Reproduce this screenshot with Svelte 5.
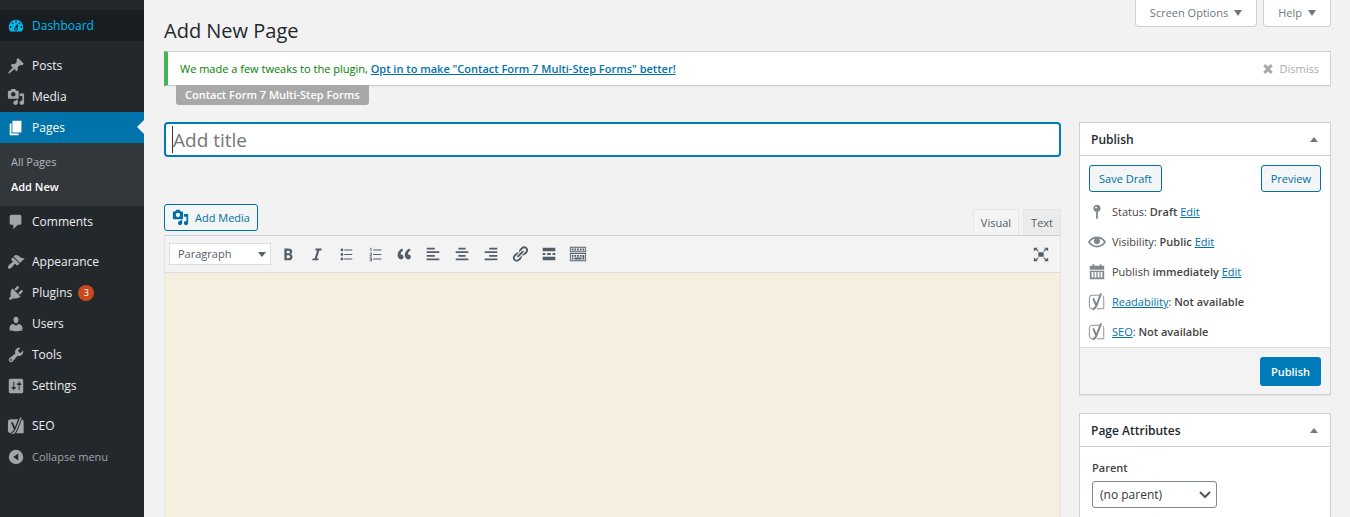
<script>
  const icons = {
    dashboard: 'M3.76 16h12.48c1.1-1.37 1.76-3.11 1.76-5 0-4.42-3.58-8-8-8s-8 3.58-8 8c0 1.89.66 3.63 1.76 5zM10 4c.55 0 1 .45 1 1s-.45 1-1 1-1-.45-1-1 .45-1 1-1zM6 6c.55 0 1 .45 1 1s-.45 1-1 1-1-.45-1-1 .45-1 1-1zm8 0c.55 0 1 .45 1 1s-.45 1-1 1-1-.45-1-1 .45-1 1-1zm-5.37 5.55L12 7v6c0 1.1-.9 2-2 2s-2-.9-2-2c0-.57.24-1.08.63-1.45zM4 10c.55 0 1 .45 1 1s-.45 1-1 1-1-.45-1-1 .45-1 1-1zm12 0c.55 0 1 .45 1 1s-.45 1-1 1-1-.45-1-1 .45-1 1-1zm-5 3c0-.55-.45-1-1-1s-1 .45-1 1 .45 1 1 1 1-.45 1-1z',
    post: 'M10.44 3.02l1.82-1.82 6.36 6.35-1.83 1.82c-1.05-.68-2.48-.57-3.41.36l-.75.75c-.92.93-1.04 2.35-.35 3.41l-1.83 1.82-2.41-2.41-2.8 2.79c-.42.42-3.38 2.71-3.8 2.29s1.86-3.39 2.28-3.81l2.79-2.79L4.1 9.36l1.83-1.82c1.05.69 2.48.57 3.4-.36l.75-.75c.93-.92 1.05-2.35.36-3.41z',
    media: 'M13 11V4c0-.55-.45-1-1-1h-1.67L9 1H5L3.67 3H2c-.55 0-1 .45-1 1v7c0 .55.45 1 1 1h10c.55 0 1-.45 1-1zM7 4.5c1.38 0 2.5 1.12 2.5 2.5S8.38 9.5 7 9.5 4.5 8.38 4.5 7 5.62 4.5 7 4.5zM14 6h5v10.5c0 1.38-1.12 2.5-2.5 2.5S14 17.88 14 16.5s1.12-2.5 2.5-2.5c.17 0 .34.02.5.05V9h-3V6zm-4 8.05V13h2v3.5c0 1.38-1.12 2.5-2.5 2.5S7 17.88 7 16.5 8.12 14 9.5 14c.17 0 .34.02.5.05z',
    page: 'M6 15V2h10v13H6zm-1 1h8v2H3V5h2v11z',
    comments: 'M5 2h9c1.1 0 2 .9 2 2v7c0 1.1-.9 2-2 2h-2l-5 5v-5H5c-1.1 0-2-.9-2-2V4c0-1.1.9-2 2-2z',
    appearance: 'M14.48 11.06L7.41 3.99l1.5-1.5c.5-.56 2.3-.47 3.51.32 1.21.8 1.43 1.28 2.91 2.1 1.18.64 2.45 1.26 4.45.85zm-.71.71L6.7 4.7 4.93 6.47c-.39.39-.39 1.02 0 1.41l1.06 1.06c.39.39.39 1.03 0 1.42-.6.6-1.43 1.11-2.21 1.69-.35.26-.7.53-1.01.84C1.43 14.23.4 16.08 1.4 17.07c.99 1 2.84-.03 4.18-1.36.31-.31.58-.66.85-1.02.57-.78 1.08-1.61 1.69-2.21.39-.39 1.02-.39 1.41 0l1.06 1.06c.39.39 1.02.39 1.41 0z',
    plugins: 'M13.11 4.36L9.87 7.6 8 5.73l3.24-3.24c.35-.34 1.05-.2 1.56.32.52.51.66 1.21.31 1.55zm-8 1.77l.91-1.12 9.01 9.01-1.19.84c-.71.71-2.63 1.16-3.82 1.16H6.14L4.9 17.26c-.59.59-1.54.59-2.12 0-.59-.58-.59-1.53 0-2.12l1.24-1.24v-3.88c0-1.13.4-3.19 1.09-3.89zm7.26 3.97l3.24-3.24c.34-.35 1.04-.21 1.55.31.52.51.66 1.21.31 1.55l-3.24 3.25z',
    users: 'M10 9.25c-2.27 0-2.73-3.44-2.73-3.44C7 4.02 7.82 2 9.97 2c2.16 0 2.98 2.02 2.71 3.81 0 0-.41 3.44-2.68 3.44zm0 2.57L12.72 10c2.39 0 4.52 2.33 4.52 4.53v2.49s-3.65 1.13-7.24 1.13c-3.65 0-7.24-1.13-7.24-1.13v-2.49c0-2.25 1.94-4.48 4.47-4.48z',
    tools: 'M16.68 9.77c-1.34 1.34-3.3 1.67-4.95.99l-5.41 6.52c-.99.99-2.59.99-3.58 0s-.99-2.59 0-3.57l6.52-5.42c-.68-1.65-.35-3.61.99-4.95 1.28-1.28 3.12-1.62 4.72-1.06l-2.89 2.89 2.82 2.82 2.86-2.87c.53 1.58.18 3.39-1.08 4.65zM3.81 16.21c.4.39 1.04.39 1.43 0 .4-.4.4-1.04 0-1.43-.39-.4-1.03-.4-1.43 0-.39.39-.39 1.03 0 1.43z',
    settings: 'M18 16V4c0-1.1-.9-2-2-2H4c-1.1 0-2 .9-2 2v12c0 1.1.9 2 2 2h12c1.1 0 2-.9 2-2zM8 11h1c.55 0 1 .45 1 1s-.45 1-1 1H8v1.5c0 .28-.22.5-.5.5s-.5-.22-.5-.5V13H6c-.55 0-1-.45-1-1s.45-1 1-1h1V5.5c0-.28.22-.5.5-.5s.5.22.5.5V11zm5-2h-1c-.55 0-1-.45-1-1s.45-1 1-1h1V5.5c0-.28.22-.5.5-.5s.5.22.5.5V7h1c.55 0 1 .45 1 1s-.45 1-1 1h-1v5.5c0 .28-.22.5-.5.5s-.5-.22-.5-.5V9z',
    collapse: 'M10 2a8 8 0 1 0 0 16a8 8 0 1 0 0-16zM12.5 6v8L7 10z',
    bold: 'M6 4v13h4.54c1.37 0 2.46-.33 3.26-1 .8-.66 1.2-1.58 1.2-2.77 0-.84-.17-1.51-.51-2.01s-.9-.85-1.67-1.03v-.09c.57-.1 1.02-.4 1.36-.9s.51-1.13.51-1.91c0-1.14-.39-1.98-1.17-2.5C12.75 4.26 11.5 4 9.78 4H6zm2.57 5.15V6.26h1.36c.73 0 1.27.11 1.61.32.34.22.51.58.51 1.07 0 .54-.16.92-.47 1.15s-.82.35-1.51.35h-1.5zm0 2.19h1.6c1.44 0 2.16.53 2.16 1.61 0 .6-.17 1.05-.51 1.34s-.86.43-1.57.43H8.57v-3.38z',
    italic: 'M14.78 6h-2.13l-2.8 9h2.12l-.62 2H4.6l.62-2h2.14l2.8-9H8.03l.62-2h6.75z',
    ul: 'M5.5 7C4.67 7 4 6.33 4 5.5 4 4.68 4.67 4 5.5 4 6.32 4 7 4.68 7 5.5 7 6.33 6.32 7 5.5 7zM8 5h9v1H8V5zm-2.5 7c-.83 0-1.5-.67-1.5-1.5C4 9.68 4.67 9 5.5 9c.82 0 1.5.68 1.5 1.5 0 .83-.68 1.5-1.5 1.5zM8 10h9v1H8v-1zm-2.5 7c-.83 0-1.5-.67-1.5-1.5 0-.82.67-1.5 1.5-1.5.82 0 1.5.68 1.5 1.5 0 .83-.68 1.5-1.5 1.5zM8 15h9v1H8v-1z',
    ol: 'M5 3h1v4H5V4H4zM8 5h9v1H8zM4 8.5h2.5v2.3L5.2 12h1.4v.9H4v-.9l1.6-1.6v-1H4zM8 10h9v1H8zM4 14h2.6v4H4v-.9h1.7v-.7H4.5v-.8h1.2v-.7H4zM8 15h9v1H8z',
    quote: 'M9.49 13.22c0-.74-.2-1.38-.61-1.9-.62-.78-1.83-.88-2.53-.72-.29-1.65 1.11-3.75 2.92-4.65L7.88 4c-2.73 1.3-5.42 4.28-4.96 8.05C3.21 14.43 4.59 16 6.54 16c.85 0 1.56-.25 2.12-.75s.83-1.18.83-2.03zm8.05 0c0-.74-.2-1.38-.61-1.9-.63-.78-1.83-.88-2.53-.72-.29-1.65 1.11-3.75 2.92-4.65L15.93 4c-2.73 1.3-5.41 4.28-4.95 8.05.29 2.38 1.66 3.95 3.61 3.95.85 0 1.56-.25 2.12-.75s.83-1.18.83-2.03z',
    left: 'M12 5V3H3v2h9zm5 4V7H3v2h14zm-5 4v-2H3v2h9zm5 4v-2H3v2h14z',
    center: 'M14 5V3H6v2h8zm3 4V7H3v2h14zm-3 4v-2H6v2h8zm3 4v-2H3v2h14z',
    right: 'M17 5V3H8v2h9zm0 4V7H3v2h14zm0 4v-2H8v2h9zm0 4v-2H3v2h14z',
    link: 'M17.74 2.76c1.68 1.69 1.68 4.41 0 6.1l-1.53 1.52c-1.12 1.12-2.7 1.47-4.14 1.09l2.62-2.61.76-.77.76-.76c.84-.84.84-2.2 0-3.04-.84-.85-2.2-.85-3.04 0l-.77.76-3.38 3.38c-.37-1.44-.02-3.02 1.1-4.14l1.52-1.53c1.69-1.68 4.42-1.68 6.1 0zM8.59 13.43l5.34-5.34c.42-.42.42-1.1 0-1.52-.44-.43-1.13-.39-1.53 0l-5.33 5.34c-.42.42-.42 1.1 0 1.52.44.43 1.13.39 1.52 0zm-.76 2.29l4.14-4.15c.38 1.44.03 3.02-1.09 4.14l-1.52 1.53c-1.69 1.68-4.41 1.68-6.1 0-1.68-1.68-1.68-4.42 0-6.1l1.53-1.52c1.12-1.12 2.7-1.47 4.14-1.1l-4.14 4.15c-.85.84-.85 2.2 0 3.05.84.84 2.2.84 3.04 0z',
    more: 'M17 7V3H3v4h14zM6 11V9H3v2h3zm6 0V9H8v2h4zm5 0V9h-3v2h3zm0 6v-4H3v4h14z',
    sink: 'M19 2v6H1V2zm-1 5V3H2v4zM5 4v2H3V4zm3 0v2H6V4zm3 0v2H9V4zm3 0v2h-2V4zm3 0v2h-2V4zm2 5v9H1V9zm-1 8v-7H2v7zM5 11v2H3v-2zm3 0v2H6v-2zm3 0v2H9v-2zm3 0v2h-2v-2zm3 0v5h-2v-5zM5 14v2H3v-2zm9 0v2H6v-2z',
    full: 'M7 8h6v5H7zM2 3h4.500L5.200 4.300 7.500 6.600l-.9.9L4.300 5.200 2 7zM18 3v4l-2.300-1.800-2.300 2.300-.9-.9 2.300-2.300L13.500 3zM2 18v-4l2.300 1.800 2.300-2.300.9.9-2.300 2.300L6.500 18zM18 18h-4.500l1.300-1.300-2.300-2.300.9-.9 2.300 2.300L18 14z',
    pin: 'M14 6c0 1.86-1.28 3.41-3 3.86V16c0 1-2 2-2 2V9.86c-1.72-.45-3-2-3-3.86 0-2.21 1.79-4 4-4s4 1.79 4 4zM8 5c0 .55.45 1 1 1s1-.45 1-1-.45-1-1-1-1 .45-1 1z',
    eye: 'M19.7 9.4C17.7 6 14 3.9 10 3.9S2.3 6 .3 9.4L0 10l.3.6c2 3.4 5.7 5.5 9.7 5.5s7.700-2.100 9.700-5.500l.3-.6zM10 14.100c-3.100 0-6-1.600-7.700-4.100C3.600 8 5.700 6.600 8 6.100c-.9.600-1.500 1.700-1.500 2.900 0 1.900 1.600 3.500 3.500 3.500s3.500-1.600 3.500-3.500c0-1.200-.600-2.300-1.500-2.900 2.300.500 4.400 1.900 5.700 3.900-1.700 2.500-4.600 4.100-7.700 4.100z',
    calendar: 'M5 1.500h2V3h6V1.500h2V3h3v4.500H2V3h3zM2 8.500h16V18H2zm2 1.500v6h2v-6zm3.300 0v6h2v-6zm3.400 0v6h2v-6zm3.300 0v6h2v-6z',
    cross: 'M2 5l3.500-3.500L10 6l4.500-4.500L18 5l-4.500 5 4.500 5-3.500 3.500L10 14l-4.500 4.500L2 15l4.500-5z'
  };

  const menu = [
    [{ name: 'Dashboard', icon: 'dashboard', state: 'hover' }],
    [
      { name: 'Posts', icon: 'post' },
      { name: 'Media', icon: 'media' },
      { name: 'Pages', icon: 'page', state: 'current', sub: ['All Pages', 'Add New'] },
      { name: 'Comments', icon: 'comments' }
    ],
    [
      { name: 'Appearance', icon: 'appearance' },
      { name: 'Plugins', icon: 'plugins', count: 3 },
      { name: 'Users', icon: 'users' },
      { name: 'Tools', icon: 'tools' },
      { name: 'Settings', icon: 'settings' }
    ],
    [{ name: 'SEO', icon: 'yoast' }]
  ];

  const tools = [
    ['Bold', 'bold'],
    ['Italic', 'italic'],
    ['Bulleted list', 'ul'],
    ['Numbered list', 'ol'],
    ['Blockquote', 'quote'],
    ['Align left', 'left'],
    ['Align center', 'center'],
    ['Align right', 'right'],
    ['Insert link', 'link'],
    ['Read more', 'more'],
    ['Toolbar toggle', 'sink']
  ];

  let title = $state('');
</script>

{#snippet icon(name)}
  <svg class="icon" viewBox="0 0 20 20" aria-hidden="true">
    <path fill="currentColor" fill-rule="evenodd" d={icons[name]} />
  </svg>
{/snippet}

{#snippet yoast(solid)}
  <svg class="icon" viewBox="0 0 20 20" aria-hidden="true">
    {#if solid}
      <path fill="currentColor" d="M4.500 2.500H15.500A3 3 0 0 1 18.500 5.500V18H4.500A3.500 3.500 0 0 1 1 14.500V6a3.500 3.500 0 0 1 3.500-3.500z" />
      <path fill="none" stroke="#23282d" stroke-width="4" d="M15 1l-5.200 13.500q-1.300 3.500-4.800 4.200" />
      <path fill="none" stroke="#23282d" stroke-width="2" d="M5.500 6l3.500 8.500" />
      <path fill="none" stroke="currentColor" stroke-width="1.600" d="M15.500 .5l-5.600 14q-1.300 3.500-4.400 4" />
    {:else}
      <path fill="none" stroke="currentColor" d="M12.500 2.500H4.500A3 3 0 0 0 1.500 5.500v9a3 3 0 0 0 3 3H5M16 3q1.500.500 1.500 2.500v12H10" />
      <path fill="none" stroke="currentColor" stroke-width="2.200" d="M5.800 6l3.400 8M14.500 .5L9.600 13.500q-1.400 4-4.600 4.800" />
    {/if}
  </svg>
{/snippet}

<div class="admin">
  <nav class="sidebar" aria-label="Main menu">
    {#each menu as group}
      <ul>
        {#each group as item}
          <li>
            <a href="#top" class={['item', item.state]}>
              {#if item.icon === 'yoast'}{@render yoast(true)}{:else}{@render icon(item.icon)}{/if}
              <span>{item.name}</span>
              {#if item.count}<span class="count">{item.count}</span>{/if}
            </a>
            {#if item.sub}
              <ul class="sub">
                {#each item.sub as s}
                  <li><a href="#top" class:active={s === 'Add New'}>{s}</a></li>
                {/each}
              </ul>
            {/if}
          </li>
        {/each}
      </ul>
    {/each}
    <button class="item collapse">{@render icon('collapse')}<span>Collapse menu</span></button>
  </nav>

  <main>
    <header>
      <h1>Add New Page</h1>
      <div class="meta">
        <button>Screen Options <i class="down"></i></button>
        <button>Help <i class="down"></i></button>
      </div>
    </header>

    <div class="notice">
      <p>We made a few tweaks to the plugin, <a href="#top">Opt in to make "Contact Form 7 Multi-Step Forms" better!</a></p>
      <button class="dismiss">{@render icon('cross')}Dismiss</button>
      <span class="source">Contact Form 7 Multi-Step Forms</span>
    </div>

    <div class="columns">
      <section class="content">
        <input class="title" type="text" aria-label="Add title" placeholder="Add title" bind:value={title} />
        <div class="above">
          <button class="btn add">{@render icon('media')}Add Media</button>
          <div class="tabs">
            <button class="tab on">Visual</button>
            <button class="tab">Text</button>
          </div>
        </div>
        <div class="editor">
          <div class="toolbar">
            <div class="format">
              <select aria-label="Format"><option>Paragraph</option></select>
              <i class="down"></i>
            </div>
            {#each tools as [label, name]}
              <button aria-label={label}>{@render icon(name)}</button>
            {/each}
            <button class="full" aria-label="Fullscreen">{@render icon('full')}</button>
          </div>
          <div class="canvas"></div>
        </div>
      </section>

      <aside>
        <section class="box">
          <h2>Publish <i class="up"></i></h2>
          <div class="actions">
            <button class="btn">Save Draft</button>
            <button class="btn">Preview</button>
          </div>
          <ul class="status">
            <li>{@render icon('pin')}<span>Status: <b>Draft</b> <a href="#top">Edit</a></span></li>
            <li>{@render icon('eye')}<span>Visibility: <b>Public</b> <a href="#top">Edit</a></span></li>
            <li>{@render icon('calendar')}<span>Publish <b>immediately</b> <a href="#top">Edit</a></span></li>
            <li>{@render yoast(false)}<span><a href="#top">Readability</a>: <b>Not available</b></span></li>
            <li>{@render yoast(false)}<span><a href="#top">SEO</a>: <b>Not available</b></span></li>
          </ul>
          <footer><button class="primary">Publish</button></footer>
        </section>

        <section class="box">
          <h2>Page Attributes <i class="up"></i></h2>
          <div class="attributes">
            <label for="parent">Parent</label>
            <div class="parent">
              <select id="parent"><option>(no parent)</option></select>
              <svg viewBox="0 0 12 8" aria-hidden="true"><path d="M1 1l5 5 5-5" fill="none" stroke="#50575e" stroke-width="2" /></svg>
            </div>
          </div>
        </section>
      </aside>
    </div>
  </main>
</div>

<style>
  :global(body) {
    background: #f2f2f2;
    overflow: hidden;
  }
  .admin {
    display: flex;
    height: 100vh;
    overflow: hidden;
    color: #444;
    font-family: 'Open Sans', 'Noto Sans', sans-serif;
    font-size: 11px;
    line-height: 16px;
  }
  .admin * { box-sizing: border-box; }
  button, select, input { font: inherit; color: inherit; margin: 0; }
  button { border: 0; padding: 0; background: none; cursor: pointer; }
  ul { list-style: none; margin: 0; padding: 0; }
  a { color: #0073aa; }
  b { font-weight: 600; }
  .icon { width: 18px; height: 18px; flex: none; display: block; }

  .sidebar {
    width: 144px;
    flex: none;
    padding-top: 10px;
    background: #23282d;
  }
  .sidebar > ul { margin-bottom: 9px; }
  .sidebar > ul:last-of-type { margin-bottom: 0; }
  .item {
    position: relative;
    display: flex;
    align-items: center;
    width: 100%;
    height: 31px;
    padding-left: 7px;
    gap: 7px;
    color: #eee;
    font-size: 12px;
    text-decoration: none;
  }
  .item .icon { color: #a0a5aa; }
  .hover { background: #191e23; }
  .hover, .hover .icon { color: #00b9eb; }
  .current { background: #0073aa; }
  .current, .current .icon { color: #fff; }
  .current::after {
    content: '';
    position: absolute;
    right: 0;
    top: 8px;
    border: 7px solid transparent;
    border-left: 0;
    border-right-color: #f2f2f2;
  }
  .count {
    width: 16px;
    border-radius: 8px;
    margin-left: -1px;
    background: #ca4a1f;
    color: #fff;
    font-size: 9px;
    text-align: center;
  }
  .collapse { color: #a0a5aa; font-size: 11px; }
  .sub {
    height: 63px;
    padding: 6px 0 6px 11px;
    background: #32373c;
  }
  .sub a {
    display: block;
    line-height: 25px;
    color: #b4b9be;
    text-decoration: none;
  }
  .sub .active { color: #fff; font-weight: 600; }

  main { flex: 1; min-width: 0; padding: 0 19px 0 20px; }
  header {
    display: flex;
    justify-content: space-between;
    align-items: flex-start;
    height: 51px;
  }
  h1 {
    margin: 0;
    padding-top: 17px;
    color: #23282d;
    font-size: 20px;
    font-weight: 400;
    line-height: 28px;
  }
  .meta { display: flex; gap: 6px; }
  .meta button {
    display: flex;
    align-items: center;
    gap: 6px;
    height: 27px;
    padding: 0 14px;
    background: #fff;
    border: 1px solid #ccd0d4;
    border-top: 0;
    border-radius: 0 0 4px 4px;
    color: #72777c;
  }
  .down, .up {
    flex: none;
    border: 4px solid transparent;
    border-bottom: 0;
    border-top: 6px solid #72777c;
  }
  .up { border-top: 0; border-bottom: 5px solid #72777c; }

  .notice {
    position: relative;
    display: flex;
    align-items: center;
    justify-content: space-between;
    height: 35px;
    padding: 1px 11px 0 12px;
    background: #fff;
    border: 1px solid #ccd0d4;
    border-left: 4px solid #46b450;
    box-shadow: 0 1px 1px rgba(0, 0, 0, 0.04);
  }
  .notice p { margin: 0; color: #008000; }
  .notice a { font-weight: 600; }
  .dismiss { display: flex; align-items: center; gap: 6px; color: #aaa; }
  .dismiss .icon { width: 12px; height: 12px; }
  .source {
    position: absolute;
    left: 8px;
    top: 100%;
    padding: 2px 9px;
    background: #a8a8a8;
    border-radius: 0 0 3px 3px;
    color: #fff;
    font-weight: 600;
  }

  .columns {
    display: grid;
    grid-template-columns: minmax(0, 1fr) 252px;
    gap: 18px;
    padding-top: 36px;
  }
  .title {
    display: block;
    width: 100%;
    height: 35px;
    padding: 0 7px;
    background: #fff;
    border: 2px solid #007cba;
    border-radius: 4px;
    color: #32373c;
    font-size: 19px;
    outline: 0;
  }
  .title:placeholder-shown {
    background: linear-gradient(#32373c, #32373c) 6px center / 1px 27px no-repeat #fff;
  }
  .title::placeholder { color: #757575; opacity: 1; }
  .above {
    display: flex;
    justify-content: space-between;
    align-items: flex-end;
    height: 78px;
  }
  .btn {
    display: flex;
    align-items: center;
    height: 27px;
    padding: 0 9px;
    background: #f3f5f6;
    border: 1px solid #0071a1;
    border-radius: 3px;
    color: #0071a1;
  }
  .add { gap: 6px; padding: 0 7px; margin-bottom: 4px; }
  .add .icon { width: 17px; height: 17px; }
  .tabs { display: flex; gap: 4px; }
  .tab {
    height: 26px;
    padding: 0 7px;
    background: #ebebeb;
    border: 1px solid #e5e5e5;
    border-bottom: 0;
    color: #555d66;
  }
  .tab.on { background: #f4f4f4; }
  .editor { border: 1px solid #e5e5e5; border-top-color: #ccd0d4; }
  .toolbar {
    display: flex;
    align-items: center;
    gap: 5px;
    height: 37px;
    padding: 0 7px 0 4px;
    background: #f3f3f3;
    border-bottom: 1px solid #ddd;
  }
  .toolbar button {
    display: grid;
    place-items: center;
    width: 24px;
    height: 24px;
    color: #555d66;
  }
  .toolbar .full { margin-left: auto; }
  .format, .parent { display: grid; align-items: center; }
  .format > *, .parent > * { grid-area: 1 / 1; }
  .format { width: 102px; }
  .format .down { justify-self: end; margin-right: 5px; border-top: 5px solid #555d66; }
  select { appearance: none; width: 100%; background: #fff; border: 1px solid #ddd; }
  .format select { height: 22px; padding: 0 8px; color: #555d66; }
  .canvas { height: 100vh; background: #f5efe0; }

  aside { display: flex; flex-direction: column; gap: 18px; }
  .box {
    background: #fff;
    border: 1px solid #ccd0d4;
    box-shadow: 0 1px 1px rgba(0, 0, 0, 0.04);
  }
  h2 {
    display: flex;
    align-items: center;
    justify-content: space-between;
    height: 33px;
    margin: 0;
    padding: 1px 12px 0 11px;
    border-bottom: 1px solid #ccd0d4;
    color: #23282d;
    font-size: 12px;
    font-weight: 600;
  }
  .actions { display: flex; justify-content: space-between; padding: 9px 9px 5px; }
  .status { padding-bottom: 0; }
  .status li { display: flex; align-items: center; gap: 6px; height: 30px; padding-left: 8px; }
  .status .icon { color: #82878c; }
  footer {
    display: flex;
    justify-content: flex-end;
    padding: 9px 9px 8px;
    background: #f3f3f3;
    border-top: 1px solid #ddd;
  }
  .primary {
    height: 29px;
    padding: 0 11px;
    background: #007cba;
    border-radius: 3px;
    color: #fff;
    font-weight: 600;
  }
  .attributes { padding: 13px 12px; }
  label { display: block; font-weight: 600; }
  .parent { width: 125px; margin-top: 5px; }
  .parent select {
    height: 27px;
    padding: 0 7px;
    border-color: #7e8993;
    border-radius: 3px;
    color: #32373c;
    font-size: 12px;
  }
  .parent svg { width: 12px; height: 8px; justify-self: end; margin-right: 6px; pointer-events: none; }
</style>
